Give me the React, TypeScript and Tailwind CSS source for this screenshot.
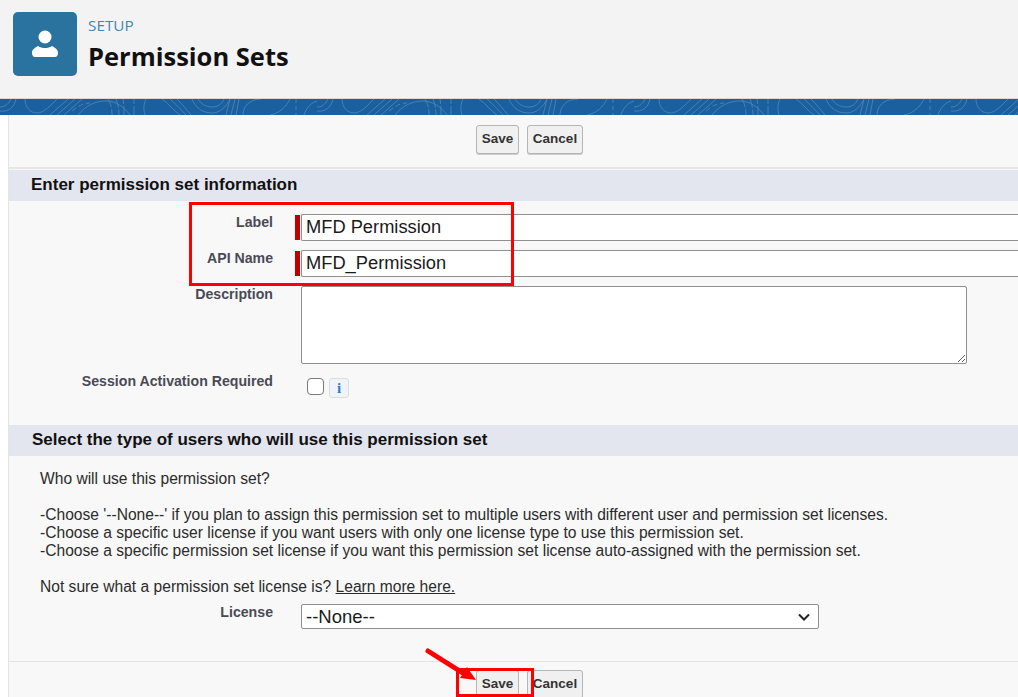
const sans = "font-['Liberation_Sans',Arial,sans-serif]";

function Buttons() {
  return (
    <div className="flex gap-2 pl-[467px]">
      <button className="h-[29px] w-[43px] rounded-[3px] border border-[#b5b5b5] bg-[#f0f0f0] text-[13.5px] font-bold text-[#333] shadow-[0_1px_0_#ccc]">
        Save
      </button>
      <button className="h-[29px] w-[56px] rounded-[3px] border border-[#b5b5b5] bg-[#f0f0f0] text-[13.5px] font-bold text-[#333] shadow-[0_1px_0_#ccc]">
        Cancel
      </button>
    </div>
  );
}

function SectionTitle({ children, pad }: { children: string; pad: string }) {
  return (
    <div className={`flex h-[31px] items-center bg-[#e3e5ef] pb-0.5 ${pad} text-[17px] font-bold text-[#111]`}>
      {children}
    </div>
  );
}

function Label({ children, top }: { children: string; top: string }) {
  return (
    <div className={`w-[264px] shrink-0 text-right text-[14.15px] font-bold leading-4 text-[#4a4a56] ${top}`}>
      {children}
    </div>
  );
}

function RequiredInput({ value }: { value: string }) {
  return (
    <div className="ml-[22px] flex flex-1 items-center">
      <div className="h-[25px] w-[5px] shrink-0 bg-[#c00000]" />
      <div className="ml-px flex h-[27px] flex-1 items-center rounded-l-[2px] border border-r-0 border-[#8f8f8f] bg-white pb-0.5 pl-1 text-[18.3px] text-[#1a1a1a]">
        {value}
      </div>
    </div>
  );
}

// the band's contour lines repeat about every 317px
function Contours() {
  return (
    <svg className="h-full w-full" width="1018" height="16">
      <defs>
        <pattern id="contours" width="317" height="16" patternUnits="userSpaceOnUse">
          <g fill="none" stroke="#4a83b8" strokeWidth="0.9">
            <path d="M0 12c8 1 14-3 16-12M0 8c6 0 9-4 11-8" />
            <path d="M25 0c0 8 5 14 12 14s14-8 20-14" />
            <path d="M50 16L68 0M57 16L75 0M64 16L82 0" />
            <path d="M72 12c6-5 12-8 18-8" strokeDasharray="5 3" />
            <path d="M78 16c8-10 18-14 28-14s18 6 24 14" />
            <path d="M108 0c3 5 4 10 4 16M116 0c2 5 3 10 3 16M124 16c0-6 0-11-1-16M134 16V0" strokeDasharray="9 2" />
            <path d="M145 16c-2-6-1-12 1-16" />
            <path d="M162 0c6 4 12 12 18 16M170 0c6 5 12 12 16 16M177 0c5 5 9 10 14 16" />
            <path d="M192 0c4 10 12 14 20 14s14-6 18-14M198 0c3 5 8 8 14 8s10-3 12-8" />
            <path d="M226 16l4-16M231 16l4-16M236 16l3-16" />
            <path d="M243 16c0-8 6-16 18-16M270 16c10-2 16-8 20-16" />
            <path d="M296 0v16" strokeDasharray="4 3" />
            <path d="M304 16c2-6 6-12 13-14" />
          </g>
        </pattern>
      </defs>
      <rect width="1018" height="16" fill="url(#contours)" />
    </svg>
  );
}

export default function App() {
  return (
    <div className={`relative h-[697px] w-[1018px] overflow-hidden bg-white ${sans}`}>
      {/* Page header */}
      <header className="flex h-[99px] items-start gap-[11px] border-b border-[#d8d8d8] bg-[#f3f3f3] pl-[13px] pt-3">
        <div className="flex h-16 w-16 items-center justify-center rounded-[5px] bg-[#2a739e]">
          <svg width="28" height="28" viewBox="0 0 28 28" fill="white">
            <circle cx="14" cy="7" r="6.5" />
            <path d="M1 23c0-3.500 2.500-5 6-7 2 1.400 4.500 2 7 2s5-.6 7-2c3.500 2 6 3.500 6 7 0 2-1 4-3 4H4c-2 0-3-2-3-4z" />
          </svg>
        </div>
        <div className="font-['Open_Sans',sans-serif]">
          <div className="mt-[2px] text-[15.3px] leading-[22px] text-[#3f86b8]">SETUP</div>
          <h1 className="mt-1 text-[25.5px] font-bold leading-8 text-[#111]">Permission Sets</h1>
        </div>
      </header>
      <div className="h-4 bg-[#1b5f9e]">
        <Contours />
      </div>

      {/* Form body */}
      <div className="ml-2 h-[582px] border-l border-[#e4e4e4] bg-[#f8f8f8]">
        <div className="h-[54px] border-b-2 border-[#e6e6e6] pt-2.5">
          <Buttons />
        </div>
        <div className="h-px" />
        <SectionTitle pad="pl-[22px]">Enter permission set information</SectionTitle>

        <div className="mt-[13px] flex h-[27px] items-start">
          <Label top="pt-0">Label</Label>
          <RequiredInput value="MFD Permission" />
        </div>
        <div className="mt-[9px] flex h-[26px] items-start">
          <Label top="pt-0">API Name</Label>
          <RequiredInput value="MFD_Permission" />
        </div>
        <div className="mt-[10px] flex items-start">
          <Label top="pt-0">Description</Label>
          <textarea className="ml-7 h-[78px] w-[666px] rounded-[2px] border border-[#8f8f8f] bg-white outline-none" />
        </div>
        <div className="mt-[14px] flex items-start">
          <Label top="-mt-[5px]">Session Activation Required</Label>
          <div className="ml-[34px] flex items-start gap-[5px]">
            <div className="h-[17px] w-[17px] rounded-[4px] border-[1.5px] border-[#7a7a7a] bg-white" />
            <div className="flex h-5 w-5 items-center justify-center rounded-[3px] border border-[#dcdcdc] bg-[#f0f3f8] font-['Liberation_Serif',serif] text-[15px] font-bold text-[#2a7fd0]">
              i
            </div>
          </div>
        </div>

        <div className="mt-[27px]">
          <SectionTitle pad="pl-[23px]">Select the type of users who will use this permission set</SectionTitle>
        </div>
        <div className="pl-[31px] pt-[14px] text-[15.6px] leading-[18px] text-[#2b2b2b]">
          <p>Who will use this permission set?</p>
          <p className="mt-[18px]">-Choose &#39;--None--&#39; if you plan to assign this permission set to multiple users with different user and permission set licenses.</p>
          <p>-Choose a specific user license if you want users with only one license type to use this permission set.</p>
          <p>-Choose a specific permission set license if you want this permission set license auto-assigned with the permission set.</p>
          <p className="mt-[18px]">
            Not sure what a permission set license is? <span className="underline">Learn more here.</span>
          </p>
        </div>
        <div className="mt-2 flex items-start">
          <Label top="pt-0">License</Label>
          <div className="ml-7 flex h-[25px] w-[518px] items-center justify-between rounded-[2px] border border-[#8f8f8f] bg-white pl-1 pr-2 text-[18.5px] text-[#1a1a1a]">
            <span>--None--</span>
            <svg width="12" height="8" viewBox="0 0 12 8" fill="none" stroke="#222" strokeWidth="2">
              <path d="M1 1.500l5 5 5-5" />
            </svg>
          </div>
        </div>
        <div className="mt-8 border-t border-[#e4e4e4] pt-2">
          <Buttons />
        </div>
      </div>

      {/* Red annotations drawn over the screenshot */}
      <div className="absolute left-[189px] top-[202px] h-[84px] w-[325px] border-[3px] border-[#ff0000]" />
      <div className="absolute left-[456px] top-[668px] h-[29px] w-[78px] border-[3px] border-[#ff0000]" />
      <svg className="absolute left-[420px] top-[645px]" width="60" height="40" viewBox="0 0 60 40" fill="#ff0000">
        <path d="M8 6l38 24" stroke="#ff0000" strokeWidth="5" strokeLinecap="round" />
        <path d="M56 35L40 33l7-11z" />
      </svg>
    </div>
  );
}
